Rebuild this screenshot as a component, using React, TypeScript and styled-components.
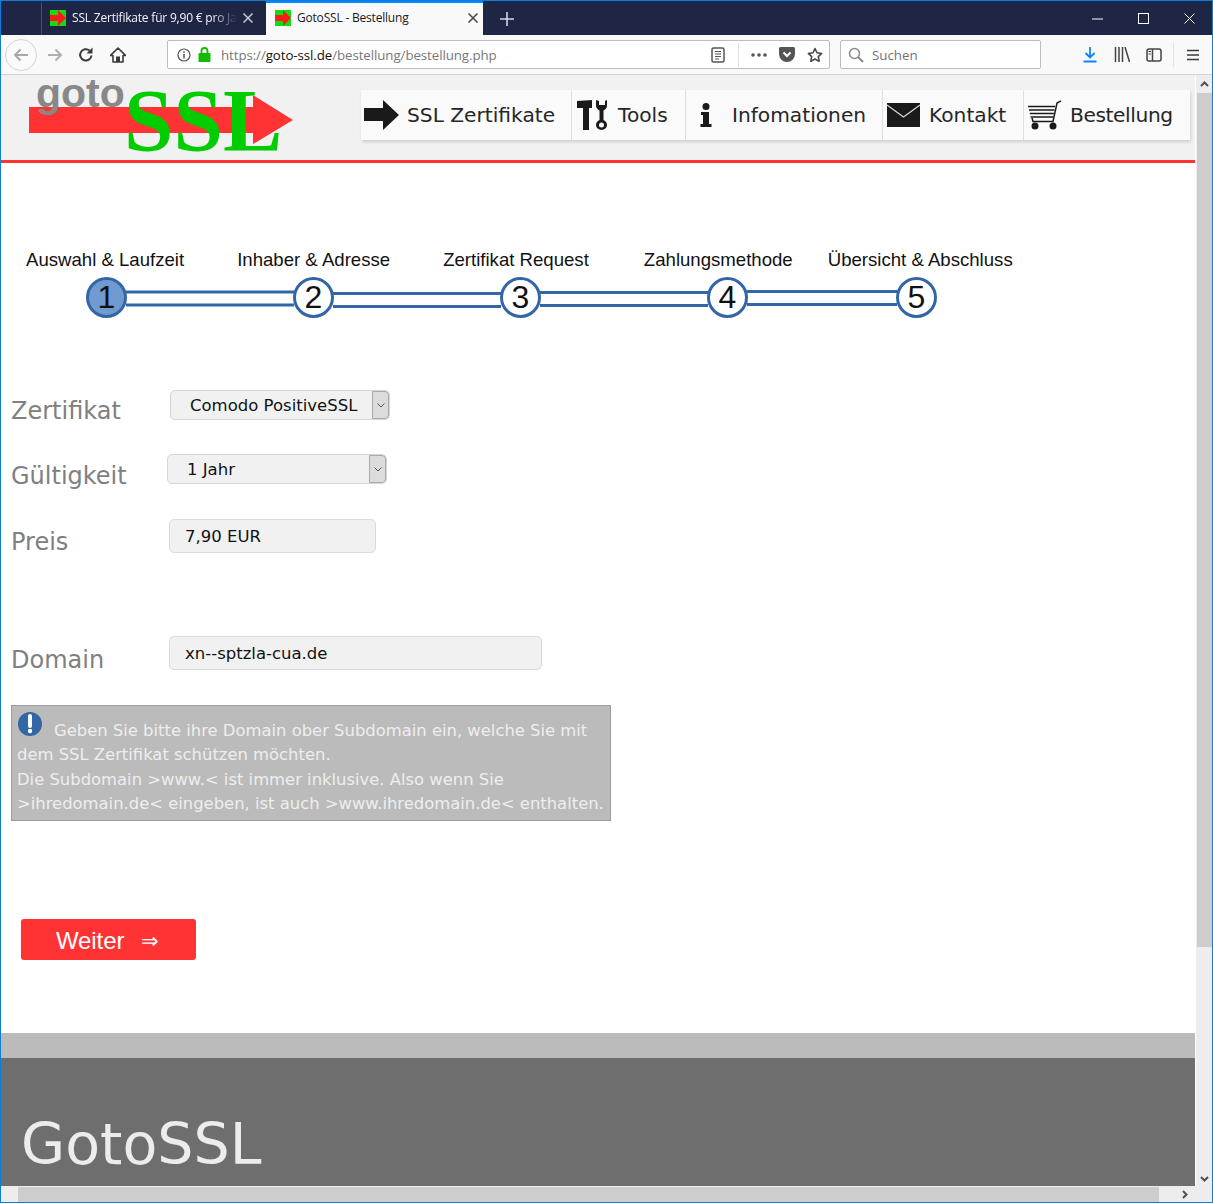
import React from 'react'
import styled, { createGlobalStyle } from 'styled-components'

const GlobalStyle = createGlobalStyle`
  html, body {
    margin: 0;
    padding: 0;
    width: 1213px;
    height: 1203px;
    overflow: hidden;
    background: #fff;
  }
`

const PAGE_FONT = '"DejaVu Sans", Verdana, sans-serif'
const CHROME_FONT = '"Open Sans", "Noto Sans", sans-serif'
const STEP_FONT = '"Liberation Sans", Arial, sans-serif'

const Frame = styled.div`
  width: 1213px;
  height: 1203px;
  box-sizing: border-box;
  border: 1px solid #0a7fdc;
  display: flex;
  flex-direction: column;
  overflow: hidden;
`

const TabBar = styled.div`
  height: 33px;
  flex: none;
  background: #1f2544;
  display: flex;
  align-items: stretch;
  padding-left: 40px;
  border-top: 1px solid #1f2544;
`

const Tab = styled.div<{ $active?: boolean }>`
  box-sizing: border-box;
  width: ${p => (p.$active ? '217px' : '225px')};
  display: flex;
  align-items: center;
  padding-left: ${p => (p.$active ? '9px' : '8px')};
  padding-right: ${p => (p.$active ? '5px' : '13px')};
  padding-bottom: 3px;
  gap: 6px;
  font: 12px ${CHROME_FONT};
  background: ${p => (p.$active ? '#f9f9fa' : 'transparent')};
  color: ${p => (p.$active ? '#1a1a1a' : '#f4f4f6')};
  border-top: 2px solid ${p => (p.$active ? '#0a84ff' : 'transparent')};
  border-left: ${p => (p.$active ? 'none' : '1px solid #4a4f6a')};
  margin-top: -1px;
`

const TabTitle = styled.span<{ $faded?: boolean }>`
  flex: 1;
  white-space: nowrap;
  overflow: hidden;
  letter-spacing: -0.2px;
  ${p => p.$faded && `
    -webkit-mask-image: linear-gradient(to right, #000 85%, transparent);
    mask-image: linear-gradient(to right, #000 85%, transparent);
  `}
`

const WindowControls = styled.div`
  margin-left: auto;
  display: flex;
  align-items: center;
  gap: 35px;
  padding-right: 17px;
  padding-bottom: 1px;
  color: #fff;
`

const Toolbar = styled.div`
  height: 40px;
  flex: none;
  box-sizing: border-box;
  background: #f9f9fa;
  border-bottom: 1px solid #d2d2d4;
  display: flex;
  align-items: center;
  color: #4a4a4f;
  font: 13.3px ${CHROME_FONT};
`

const BackButton = styled.div`
  width: 32px;
  height: 32px;
  margin-left: 4px;
  box-sizing: border-box;
  border: 1px solid #d4d4d6;
  border-radius: 50%;
  background: #fafafa;
  display: flex;
  align-items: center;
  justify-content: center;
  flex: none;
`

const ToolIcon = styled.div<{ $left: number; $width?: number }>`
  flex: none;
  width: ${p => p.$width ?? 18}px;
  margin-left: ${p => p.$left}px;
  display: flex;
  align-items: center;
  justify-content: center;
`

const UrlBar = styled.div`
  box-sizing: border-box;
  width: 663px;
  height: 29px;
  margin-left: 40px;
  background: #fff;
  border: 1px solid #bdbdbd;
  border-radius: 2px;
  display: flex;
  align-items: center;
  padding-left: 9px;
  flex: none;
`

const UrlText = styled.span`
  margin-left: 10px;
  color: #77777a;
  letter-spacing: -0.08px;
  white-space: nowrap;
`

const UrlHost = styled.span`
  color: #111;
`

const UrlSeparator = styled.div`
  width: 1px;
  height: 24px;
  background: #e2e2e4;
  flex: none;
`

const SearchBox = styled.div`
  box-sizing: border-box;
  width: 201px;
  height: 29px;
  margin-left: 10px;
  background: #fff;
  border: 1px solid #bdbdbd;
  border-radius: 2px;
  display: flex;
  align-items: center;
  padding-left: 7px;
  gap: 8px;
  color: #727275;
  flex: none;
`

const Middle = styled.div`
  flex: 1;
  min-height: 0;
  display: flex;
`

const Viewport = styled.div`
  width: 1194px;
  flex: none;
  overflow: hidden;
  display: flex;
  flex-direction: column;
`

const VScroll = styled.div`
  flex: 1;
  background: #ededed;
  margin-left: 1px;
  display: flex;
  flex-direction: column;
  align-items: center;
`

const VThumb = styled.div`
  width: 15px;
  height: 854px;
  background: #cdcdcd;
  flex: none;
`

const VSpacer = styled.div`
  flex: 1;
`

const ScrollArrow = styled.div<{ $height: number }>`
  height: ${p => p.$height}px;
  flex: none;
  display: flex;
  align-items: center;
  justify-content: center;
`

const HScroll = styled.div`
  height: 16px;
  flex: none;
  background: #ededed;
  display: flex;
  align-items: center;
`

const HThumb = styled.div`
  width: 1141px;
  height: 15px;
  margin-left: 17px;
  background: #cdcdcd;
`

const Header = styled.header`
  height: 88px;
  flex: none;
  box-sizing: border-box;
  background: #f1f1f1;
  border-bottom: 3px solid #ff3333;
  display: flex;
  align-items: flex-start;
`

const Logo = styled.div`
  position: relative;
  width: 360px;
  height: 85px;
  flex: none;
`

const LogoBar = styled.div`
  position: absolute;
  left: 28px;
  top: 32px;
  width: 225px;
  height: 26px;
  background: #ff3333;
`

const LogoHead = styled.svg`
  position: absolute;
  left: 252px;
  top: 20px;
`

const LogoGoto = styled.span`
  position: absolute;
  left: 35px;
  top: -6px;
  font: bold 41px/48px ${STEP_FONT};
  color: #888;
`

const LogoSsl = styled.span`
  position: absolute;
  left: 123px;
  top: 1px;
  font: bold 89px/89px "Liberation Serif", "Times New Roman", serif;
  color: #00cc00;
`

const Nav = styled.nav`
  display: flex;
  margin-top: 15px;
  height: 50px;
  background: #fafafa;
  box-shadow: 1px 2px 3px rgba(0, 0, 0, 0.15);
`

const NavItem = styled.a<{ $width: number; $gap: number; $pad: number; $tight?: boolean }>`
  box-sizing: border-box;
  width: ${p => p.$width}px;
  padding-left: ${p => p.$pad}px;
  display: flex;
  align-items: center;
  gap: ${p => p.$gap}px;
  font: 20.2px ${PAGE_FONT};
  letter-spacing: ${p => (p.$tight ? '-0.4px' : '0')};
  color: #262626;
  white-space: nowrap;
  & + & {
    border-left: 1px solid #dfdfdf;
  }
`

const Steps = styled.section`
  margin-top: 85px;
  padding-left: 25px;
`

const StepLabels = styled.div`
  display: flex;
  font: 18.6px/24px ${STEP_FONT};
  color: #111;
  white-space: nowrap;
`

const StepLabel = styled.span<{ $gap: number }>`
  margin-left: ${p => p.$gap}px;
`

const StepTrack = styled.div`
  display: flex;
  align-items: center;
  margin-top: 5px;
  margin-left: 60px;
`

const StepCircle = styled.div<{ $current?: boolean }>`
  box-sizing: border-box;
  width: 41px;
  height: 41px;
  flex: none;
  border: 3px solid #3366a6;
  border-radius: 50%;
  background: ${p => (p.$current ? '#6f9bd0' : '#fff')};
  font: 32px/35px ${STEP_FONT};
  color: #111;
  text-align: center;
  position: relative;
  z-index: 1;
`

const StepLine = styled.div<{ $width: number; $shift: number }>`
  width: ${p => p.$width}px;
  height: 16px;
  box-sizing: border-box;
  flex: none;
  margin: 0 -1px;
  border-top: 3px solid #3366a6;
  border-bottom: 3px solid #3366a6;
  background: #fff;
  transform: translateY(${p => p.$shift}px);
`

const Form = styled.section`
  margin-top: 72px;
  padding-left: 10px;
`

const FormRow = styled.div<{ $height: number }>`
  display: flex;
  align-items: flex-start;
  height: ${p => p.$height}px;
`

const FieldLabel = styled.label<{ $top: number }>`
  width: 156px;
  flex: none;
  margin-top: ${p => p.$top}px;
  font: 24px/30px ${PAGE_FONT};
  color: #808080;
`

const SelectBox = styled.div<{ $indent: number }>`
  box-sizing: border-box;
  width: 220px;
  height: 30px;
  margin-left: ${p => p.$indent}px;
  background: #f1f1f1;
  border: 1px solid #d6d6d6;
  border-radius: 5px;
  display: flex;
  align-items: center;
  font: 16.5px ${PAGE_FONT};
  color: #111;
`

const SelectValue = styled.span`
  flex: 1;
  padding-left: 19px;
  white-space: nowrap;
`

const SelectButton = styled.span`
  width: 17px;
  height: 28px;
  box-sizing: border-box;
  background: #dcdcdc;
  border: 1px solid #a9a9a9;
  border-radius: 0 4px 4px 0;
  display: flex;
  align-items: center;
  justify-content: center;
  flex: none;
`

const TextBox = styled.div<{ $width: number }>`
  box-sizing: border-box;
  width: ${p => p.$width}px;
  height: 34px;
  margin-left: 2px;
  padding-left: 15px;
  background: #f1f1f1;
  border: 1px solid #d9d9d9;
  border-radius: 5px;
  display: flex;
  align-items: center;
  font: 16.5px ${PAGE_FONT};
  color: #111;
`

const Notice = styled.div`
  box-sizing: border-box;
  width: 600px;
  height: 116px;
  padding: 6px 5px 0;
  background: #bbbbbb;
  border: 1px solid #9c9c9c;
  font: 16.4px/24.4px ${PAGE_FONT};
  color: #eeeeee;
  white-space: nowrap;
`

const NoticeIcon = styled.svg`
  vertical-align: 0;
  margin-right: 12px;
  margin-left: 1px;
`

const WeiterButton = styled.button`
  display: flex;
  align-items: center;
  width: 175px;
  height: 41px;
  margin: 98px 0 0 10px;
  background: #ff3333;
  border: none;
  border-radius: 3px;
  font: 24px ${STEP_FONT};
  color: #fff;
  letter-spacing: -0.1px;
  padding: 2px 0 0 35px;
`

const WeiterArrow = styled.span`
  margin-left: 17px;
  font-size: 21px;
`

const FooterBand = styled.div`
  height: 25px;
  margin-top: 73px;
  background: #bbbbbb;
  flex: none;
`

const Footer = styled.footer`
  flex: 1;
  background: #6e6e6e;
  padding: 47px 0 0 20px;
  font: 57px/78px ${PAGE_FONT};
  color: #ececec;
`

const BrowserFavicon = () => (
  <svg width="16" height="16" viewBox="0 0 16 16" style={{ flex: 'none' }}>
    <rect width="16" height="16" fill="#10dd10" />
    <path d="M0 5h8V0l8 8-8 8v-5H0z" fill="#ff1a1a" />
  </svg>
)

const CloseX = ({ color = '#555', size = 10 }: { color?: string; size?: number }) => (
  <svg width={size} height={size} viewBox="0 0 10 10" style={{ flex: 'none' }}>
    <path d="M0.5 0.5l9 9M9.5 0.5l-9 9" stroke={color} strokeWidth="1.500" fill="none" />
  </svg>
)

const Chevron = ({ d }: { d: string }) => (
  <svg width="9" height="9" viewBox="0 0 9 9">
    <path d={d} stroke="#505050" strokeWidth="2" fill="none" />
  </svg>
)

const SelectArrow = () => (
  <svg width="8" height="5" viewBox="0 0 8 5">
    <path d="M0.500 0.500L4 4l3.500-3.500" stroke="#555" strokeWidth="1" fill="none" />
  </svg>
)

const steps = ['1', '2', '3', '4', '5']
const lineWidths = [168, 168, 168, 150]
const lineShifts = [0.5, 2, 1, 0]

export default function App() {
  return (
    <Frame>
      <GlobalStyle />
      <TabBar>
        <Tab>
          <BrowserFavicon />
          <TabTitle $faded>SSL Zertifikate für 9,90 € pro Jahr</TabTitle>
          <CloseX color="#c8c9d2" />
        </Tab>
        <Tab $active>
          <BrowserFavicon />
          <TabTitle>GotoSSL - Bestellung</TabTitle>
          <CloseX color="#444" />
        </Tab>
        <ToolIcon $left={16} $width={16}>
          <svg width="14" height="14" viewBox="0 0 14 14">
            <path d="M7 0v14M0 7h14" stroke="#d4d5dd" strokeWidth="1.600" />
          </svg>
        </ToolIcon>
        <WindowControls>
          <svg width="11" height="11" viewBox="0 0 11 11"><path d="M0 6h11" stroke="#fff" strokeWidth="1" /></svg>
          <svg width="11" height="11" viewBox="0 0 11 11"><rect x="0.500" y="0.500" width="10" height="10" stroke="#fff" fill="none" /></svg>
          <svg width="11" height="11" viewBox="0 0 11 11"><path d="M0.500 0.500l10 10M10.500 0.500l-10 10" stroke="#fff" fill="none" /></svg>
        </WindowControls>
      </TabBar>

      <Toolbar>
        <BackButton>
          <svg width="16" height="14" viewBox="0 0 16 14">
            <path d="M15 7H2M7.500 1.500L2 7l5.500 5.500" stroke="#a8a8aa" strokeWidth="2" fill="none" />
          </svg>
        </BackButton>
        <ToolIcon $left={9}>
          <svg width="16" height="14" viewBox="0 0 16 14">
            <path d="M1 7h13M8.500 1.500L14 7l-5.500 5.500" stroke="#b0b0b2" strokeWidth="2" fill="none" />
          </svg>
        </ToolIcon>
        <ToolIcon $left={13}>
          <svg width="16" height="16" viewBox="0 0 16 16">
            <path d="M13.500 8.500A5.700 5.700 0 1 1 11.500 3.500" stroke="#3a3a3e" strokeWidth="2" fill="none" />
            <path d="M14.500 0.500v6h-6z" fill="#3a3a3e" />
          </svg>
        </ToolIcon>
        <ToolIcon $left={14}>
          <svg width="16" height="16" viewBox="0 0 16 16">
            <path d="M8 1L0.500 8.500H3V15h10V8.500h2.500z" stroke="#3a3a3e" strokeWidth="1.600" fill="none" strokeLinejoin="round" />
            <rect x="6" y="9.500" width="4" height="5.500" fill="#3a3a3e" />
          </svg>
        </ToolIcon>
        <UrlBar>
          <svg width="14" height="14" viewBox="0 0 14 14" style={{ flex: 'none' }}>
            <circle cx="7" cy="7" r="6" stroke="#555" strokeWidth="1.200" fill="none" />
            <path d="M7 6v4.500M7 3.200v1.600" stroke="#555" strokeWidth="1.500" />
          </svg>
          <svg width="13" height="15" viewBox="0 0 13 15" style={{ flex: 'none', marginLeft: 7 }}>
            <rect x="0.500" y="6" width="12" height="9" rx="1" fill="#12bc00" />
            <path d="M3.500 6V4a3 3 0 0 1 6 0v2" stroke="#12bc00" strokeWidth="1.800" fill="none" />
          </svg>
          <UrlText>
            https://<UrlHost>goto-ssl.de</UrlHost>/bestellung/bestellung.php
          </UrlText>
          <ToolIcon $left={214} $width={14}>
            <svg width="14" height="16" viewBox="0 0 14 16">
              <rect x="1" y="1" width="12" height="14" rx="1.500" stroke="#555" strokeWidth="1.500" fill="none" />
              <path d="M4 4.500h6M4 7h6M4 9.500h6M4 12h4" stroke="#555" strokeWidth="1" />
            </svg>
          </ToolIcon>
          <ToolIcon $left={13} $width={1}><UrlSeparator /></ToolIcon>
          <ToolIcon $left={11} $width={18}>
            <svg width="16" height="4" viewBox="0 0 16 4">
              <circle cx="2" cy="2" r="1.800" fill="#555" /><circle cx="8" cy="2" r="1.800" fill="#555" /><circle cx="14" cy="2" r="1.800" fill="#555" />
            </svg>
          </ToolIcon>
          <ToolIcon $left={11} $width={16}>
            <svg width="16" height="15" viewBox="0 0 16 15">
              <path d="M1.500 0h13A1.500 1.500 0 0 1 16 1.500V7A8 8 0 0 1 0 7V1.500A1.500 1.500 0 0 1 1.500 0z" fill="#555" />
              <path d="M4.500 5.500L8 9l3.500-3.500" stroke="#fff" strokeWidth="2" fill="none" />
            </svg>
          </ToolIcon>
          <ToolIcon $left={12} $width={16}>
            <svg width="16" height="16" viewBox="0 0 16 16">
              <path d="M8 1.500l2 4.300 4.700.6-3.400 3.200.9 4.700L8 12l-4.200 2.300.9-4.700L1.300 6.400 6 5.800z" stroke="#444" strokeWidth="1.500" fill="none" strokeLinejoin="round" />
            </svg>
          </ToolIcon>
        </UrlBar>
        <SearchBox>
          <svg width="16" height="16" viewBox="0 0 16 16" style={{ flex: 'none' }}>
            <circle cx="6.500" cy="6.500" r="5" stroke="#8a8a8c" strokeWidth="1.500" fill="none" />
            <path d="M10 10l5 5" stroke="#8a8a8c" strokeWidth="2" />
          </svg>
          <span>Suchen</span>
        </SearchBox>
        <ToolIcon $left={41} $width={16}>
          <svg width="16" height="16" viewBox="0 0 16 16">
            <path d="M8 0v10M3.500 6L8 10.500 12.500 6" stroke="#0a84ff" strokeWidth="1.800" fill="none" />
            <path d="M1.500 14.500h13" stroke="#0a84ff" strokeWidth="2" />
          </svg>
        </ToolIcon>
        <ToolIcon $left={16} $width={16}>
          <svg width="16" height="15" viewBox="0 0 16 15">
            <path d="M1.500 0v15M5 0v15M8.500 0v15M11 0l4.500 15" stroke="#444" strokeWidth="1.500" fill="none" />
          </svg>
        </ToolIcon>
        <ToolIcon $left={16} $width={16}>
          <svg width="16" height="14" viewBox="0 0 16 14">
            <rect x="1" y="1" width="14" height="12" rx="2" stroke="#444" strokeWidth="1.500" fill="none" />
            <path d="M6.500 1v12" stroke="#444" strokeWidth="1.500" />
            <path d="M2.500 3.500h2.500M2.500 6h2.500" stroke="#444" strokeWidth="1" />
          </svg>
        </ToolIcon>
        <ToolIcon $left={11} $width={1}><UrlSeparator /></ToolIcon>
        <ToolIcon $left={12} $width={14}>
          <svg width="12" height="12" viewBox="0 0 12 12">
            <path d="M0 1.500h12M0 6h12M0 10.500h12" stroke="#3a3a3e" strokeWidth="1.700" />
          </svg>
        </ToolIcon>
      </Toolbar>

      <Middle>
        <Viewport>
          <Header>
            <Logo>
              <LogoBar />
              <LogoGoto>goto</LogoGoto>
              <LogoSsl>SSL</LogoSsl>
              <LogoHead width="40" height="49" viewBox="0 0 40 49">
                <path d="M0 0l40 25L0 49z" fill="#ff3333" />
              </LogoHead>
            </Logo>
            <Nav>
              <NavItem $width={210} $gap={8} $pad={3}>
                <svg width="35" height="30" viewBox="0 0 35 30">
                  <path d="M0 8h19V0l16 15-16 15v-9H0z" fill="#1a1a1a" />
                </svg>
                SSL Zertifikate
              </NavItem>
              <NavItem $width={114} $gap={10} $pad={5}>
                <svg width="31" height="30" viewBox="0 0 31 30">
                  <path d="M0 1l15-1v8h-3v22H6V8H0z" fill="#1a1a1a" />
                  <path d="M19 0v5c0 3 1 4 3.500 5.500V20c-2.500 1-3.500 3-3.500 5a5.500 5 0 0 0 11 0c0-2-1-4-3.500-5v-9.500C29 9 30 8 30 5V0l-2 1v4h-6V1zM22 25a2.500 2.500 0 1 0 5 0 2.500 2.500 0 1 0-5 0z" fill="#1a1a1a" fillRule="evenodd" />
                </svg>
                Tools
              </NavItem>
              <NavItem $width={197} $gap={20} $pad={14}>
                <svg width="12" height="24" viewBox="0 0 12 24">
                  <circle cx="6" cy="3.500" r="3.500" fill="#1a1a1a" />
                  <path d="M1 9h8v12h2.500v3H.5v-3H3v-9H1z" fill="#1a1a1a" />
                </svg>
                Infomationen
              </NavItem>
              <NavItem $width={141} $gap={9} $pad={4}>
                <svg width="33" height="24" viewBox="0 0 33 24">
                  <rect width="33" height="24" fill="#1a1a1a" />
                  <path d="M0 2l16.500 12L33 2" stroke="#d8d8d8" strokeWidth="1.200" fill="none" />
                </svg>
                Kontakt
              </NavItem>
              <NavItem $width={167} $gap={9} $pad={4} $tight>
                <svg width="33" height="30" viewBox="0 0 33 30">
                  <path d="M0 6.500h27l-2 12H3z" fill="#fafafa" />
                  <path d="M0 6.500h27M1 10h25.500M1.800 13.500h24M2.500 17h23" stroke="#1a1a1a" strokeWidth="1.500" />
                  <path d="M4 18l1 3.500h20L29 3l4-2" stroke="#1a1a1a" strokeWidth="1.500" fill="none" />
                  <circle cx="7" cy="26" r="3.500" fill="#1a1a1a" />
                  <circle cx="25" cy="26" r="3.500" fill="#1a1a1a" />
                </svg>
                Bestellung
              </NavItem>
            </Nav>
          </Header>

          <Steps>
            <StepLabels>
              <StepLabel $gap={0}>Auswahl &amp; Laufzeit</StepLabel>
              <StepLabel $gap={53}>Inhaber &amp; Adresse</StepLabel>
              <StepLabel $gap={53}>Zertifikat Request</StepLabel>
              <StepLabel $gap={55}>Zahlungsmethode</StepLabel>
              <StepLabel $gap={35}>Übersicht &amp; Abschluss</StepLabel>
            </StepLabels>
            <StepTrack>
              {steps.map((step, i) => (
                <React.Fragment key={step}>
                  <StepCircle $current={i === 0}>{step}</StepCircle>
                  {i < lineWidths.length && <StepLine $width={lineWidths[i]} $shift={lineShifts[i]} />}
                </React.Fragment>
              ))}
            </StepTrack>
          </Steps>

          <Form>
            <FormRow $height={64}>
              <FieldLabel $top={6}>Zertifikat</FieldLabel>
              <SelectBox $indent={3}>
                <SelectValue>Comodo PositiveSSL</SelectValue>
                <SelectButton><SelectArrow /></SelectButton>
              </SelectBox>
            </FormRow>
            <FormRow $height={65}>
              <FieldLabel $top={7}>Gültigkeit</FieldLabel>
              <SelectBox $indent={0}>
                <SelectValue>1 Jahr</SelectValue>
                <SelectButton><SelectArrow /></SelectButton>
              </SelectBox>
            </FormRow>
            <FormRow $height={117}>
              <FieldLabel $top={8}>Preis</FieldLabel>
              <TextBox $width={207}>7,90 EUR</TextBox>
            </FormRow>
            <FormRow $height={69}>
              <FieldLabel $top={9}>Domain</FieldLabel>
              <TextBox $width={373}>xn--sptzla-cua.de</TextBox>
            </FormRow>
            <Notice>
              <NoticeIcon width="24" height="24" viewBox="0 0 24 24">
                <circle cx="12" cy="12" r="12" fill="#3366a6" />
                <path d="M12 4v10" stroke="#fff" strokeWidth="4" strokeLinecap="round" />
                <circle cx="12" cy="19" r="2.200" fill="#fff" />
              </NoticeIcon>
              Geben Sie bitte ihre Domain ober Subdomain ein, welche Sie mit<br />
              dem SSL Zertifikat schützen möchten.<br />
              Die Subdomain &gt;www.&lt; ist immer inklusive. Also wenn Sie<br />
              &gt;ihredomain.de&lt; eingeben, ist auch &gt;www.ihredomain.de&lt; enthalten.
            </Notice>
            <WeiterButton>Weiter<WeiterArrow>⇒</WeiterArrow></WeiterButton>
          </Form>

          <FooterBand />
          <Footer>GotoSSL</Footer>
        </Viewport>
        <VScroll>
          <ScrollArrow $height={18}><Chevron d="M1 6l3.500-3.500L8 6" /></ScrollArrow>
          <VThumb />
          <VSpacer />
          <ScrollArrow $height={16}><Chevron d="M1 3l3.500 3.500L8 3" /></ScrollArrow>
        </VScroll>
      </Middle>
      <HScroll>
        <HThumb />
        <ToolIcon $left={20} $width={10}><Chevron d="M3 1l3.500 3.500L3 8" /></ToolIcon>
      </HScroll>
    </Frame>
  )
}
